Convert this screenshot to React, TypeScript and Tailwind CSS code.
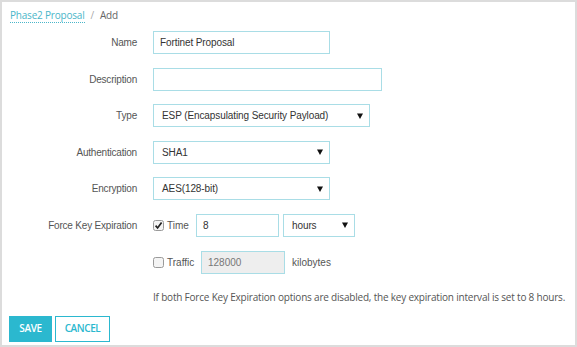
import React from "react";

const arial = { fontFamily: '"Liberation Sans", Arial, sans-serif' };
const open = { fontFamily: '"Open Sans", "Noto Sans", sans-serif' };

function Arrow() {
  return (
    <svg width="6" height="6" viewBox="0 0 6 6" className="shrink-0">
      <path d="M0 0.5 L6 0.5 L3 6 Z" fill="#111" />
    </svg>
  );
}

function Check({ checked }: { checked: boolean }) {
  return (
    <svg width="11" height="11" viewBox="0 0 11 11" className="shrink-0">
      <rect x="0.5" y="0.5" width="10" height="10" rx="2" fill="#f4f4f4" stroke="#9a9a9a" />
      {checked && <path d="M2.6 5.6 L4.6 8 L8.6 2.6" fill="none" stroke="#222" strokeWidth="1.7" />}
    </svg>
  );
}

function Label({ children }: { children: React.ReactNode }) {
  return (
    <div className="w-[135px] shrink-0 text-right text-[10px] tracking-[-0.2px] text-[#555] whitespace-nowrap" style={arial}>
      {children}
    </div>
  );
}

function Select({ value, w }: { value: string; w: string }) {
  return (
    <div className={`${w} h-[23px] border border-[#a9dde6] flex items-center justify-between pl-[8px] pr-[6px] text-[10px] tracking-[-0.1px] text-[#333] whitespace-nowrap`} style={arial}>
      <span>{value}</span>
      <Arrow />
    </div>
  );
}

export default function App() {
  return (
    <div className="w-[577px] h-[347px] border-2 border-[#dcdcdc] bg-white relative overflow-hidden">
      <div className="flex items-center h-[24px] pl-[8px] pt-[3px] text-[10px] tracking-[-0.2px]" style={open}>
        <span className="text-[#4ab6c9] border-b border-dotted border-[#4ab6c9] leading-[14px]">Phase2 Proposal</span>
        <span className="text-[#aaa] mx-[6px]">/</span>
        <span className="text-[#666]">Add</span>
      </div>
      <div className="flex flex-col gap-[13.6px] mt-[5px]">
        <div className="flex items-center gap-[16px]">
          <Label>Name</Label>
          <div className="w-[177px] h-[23px] border border-[#a9dde6] flex items-center pl-[6px] text-[10px] tracking-[-0.1px] text-[#333]" style={arial}>Fortinet Proposal</div>
        </div>
        <div className="flex items-center gap-[16px]">
          <Label>Description</Label>
          <div className="w-[229px] h-[23px] border border-[#a9dde6]" />
        </div>
        <div className="flex items-center gap-[16px]">
          <Label>Type</Label>
          <Select value="ESP (Encapsulating Security Payload)" w="w-[217px]" />
        </div>
        <div className="flex items-center gap-[16px]">
          <Label>Authentication</Label>
          <Select value="SHA1" w="w-[177px]" />
        </div>
        <div className="flex items-center gap-[16px]">
          <Label>Encryption</Label>
          <Select value="AES(128-bit)" w="w-[177px]" />
        </div>
        <div className="flex items-center gap-[16px]">
          <Label>Force Key Expiration</Label>
          <div className="flex items-center">
            <Check checked />
            <span className="ml-[3px] text-[10px] text-[#555] w-[29px]" style={arial}>Time</span>
            <div className="w-[83px] h-[23px] border border-[#a9dde6] flex items-center pl-[6px] text-[10px] text-[#333]" style={arial}>8</div>
            <div className="ml-[4px]">
              <Select value="hours" w="w-[72px]" />
            </div>
          </div>
        </div>
        <div className="flex items-center gap-[16px]">
          <Label>{""}</Label>
          <div className="flex items-center">
            <Check checked={false} />
            <span className="ml-[3px] text-[10px] text-[#555] w-[34px]" style={arial}>Traffic</span>
            <div className="w-[84px] h-[23px] border border-[#a9dde6] bg-[#eeeeee] flex items-center pl-[6px] text-[10px] text-[#777]" style={arial}>128000</div>
            <span className="ml-[7px] text-[10px] text-[#555]" style={arial}>kilobytes</span>
          </div>
        </div>
      </div>
      <div className="pl-[151px] mt-[16px] text-[10px] tracking-[-0.2px] text-[#555] leading-[14px] whitespace-nowrap" style={open}>
        If both Force Key Expiration options are disabled, the key expiration interval is set to 8 hours.
      </div>
      <div className="flex gap-[3px] pl-[7px] mt-[12px]">
        <div className="w-[43px] h-[26px] bg-[#2bb8cf] text-white text-[10px] font-semibold flex items-center justify-center tracking-[-0.4px]" style={open}>SAVE</div>
        <div className="w-[55px] h-[26px] border border-[#2bb8cf] text-[#2bb8cf] text-[10px] font-semibold flex items-center justify-center tracking-[-0.4px]" style={open}>CANCEL</div>
      </div>
    </div>
  );
}
